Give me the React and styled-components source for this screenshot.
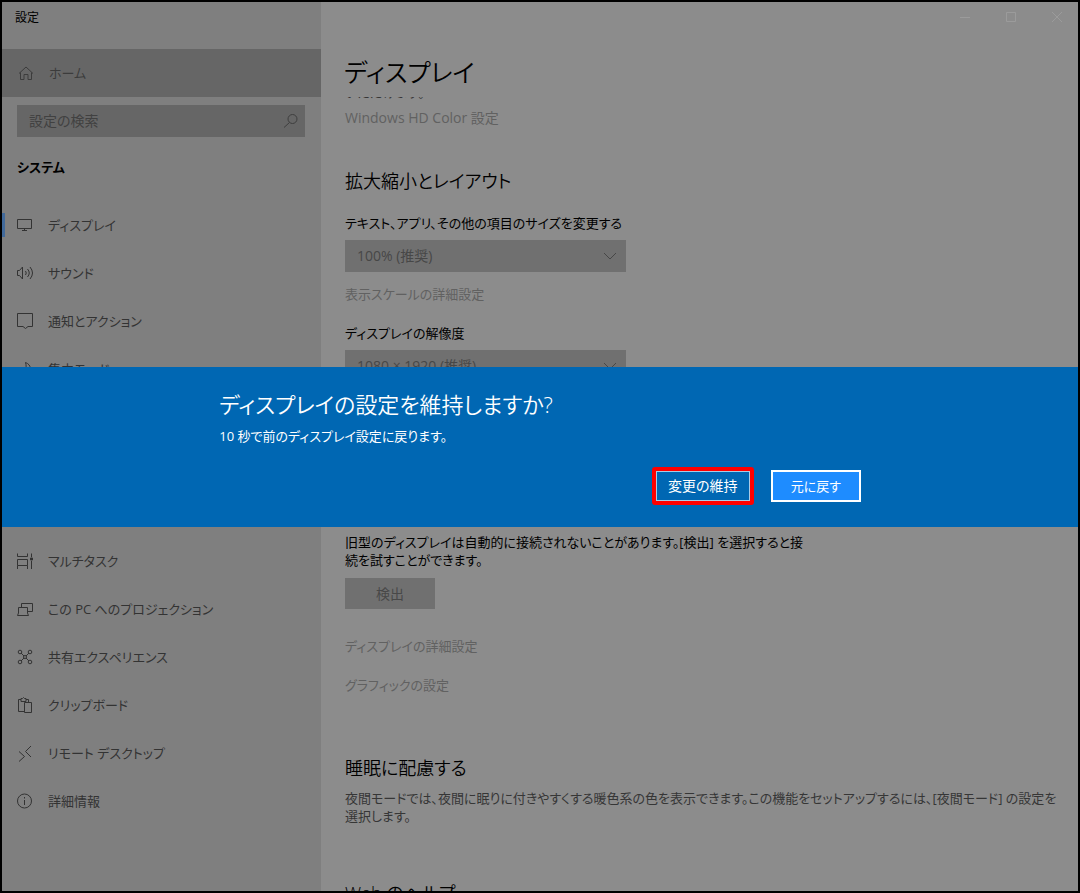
import React from "react";
import styled, { createGlobalStyle, css } from "styled-components";

const GlobalStyle = createGlobalStyle`
  *, *::before, *::after {
    box-sizing: border-box;
  }

  body {
    margin: 0;
    color: #000;
    font-family: "Open Sans", "Noto Sans CJK JP", sans-serif;
    font-size: 13px;
    font-feature-settings: "palt";
    line-height: 18px;
  }

  h1, h2, h3, p, ul {
    margin: 0;
    padding: 0;
  }

  button, input, select {
    border: 0;
    border-radius: 0;
    padding: 0;
    font: inherit;
    font-size: 14px;
    font-feature-settings: inherit;
  }
`;

const Window = styled.div`
  display: grid;
  grid-template-columns: 319px 1fr;
  height: 100vh;
  border: 2px solid #000;
  background: #8c8c8c;
  overflow: hidden;
`;

const Sidebar = styled.aside`
  background: #7f7f7f;
  overflow: hidden;
`;

const AppTitle = styled.div`
  height: 47px;
  padding: 7px 13px;
  font-size: 12px;
`;

const Icon = styled.svg`
  flex: none;
  width: 18px;
  height: 18px;
  fill: none;
  stroke: currentColor;
`;

const rowStyle = css`
  display: flex;
  align-items: center;
  gap: 14px;
  height: 48px;
  padding-left: 14px;
  color: #333;
  text-decoration: none;
`;

const HomeLink = styled.a`
  ${rowStyle}
  padding-left: 15px;
  background: #666;
  color: #3c3c3c;
`;

const SearchBox = styled.label`
  display: flex;
  align-items: center;
  height: 32px;
  margin: 8px 16px 0 15px;
  padding: 0 6px 0 12px;
  background: #666;
  color: #3e3e3e;
`;

const SearchInput = styled.input`
  flex: 1;
  min-width: 0;
  background: none;
  outline: none;

  &::placeholder {
    color: #414141;
    opacity: 1;
  }
`;

const Category = styled.h2`
  padding: 21px 15px 25px;
  font-size: 13px;
  font-weight: 600;
  line-height: 18px;
`;

const NavList = styled.ul`
  list-style: none;
  margin-top: ${(props) => props.$offset || 0}px;
`;

const NavLink = styled.a`
  ${rowStyle}
  ${(props) =>
    props.$active &&
    css`
      background: linear-gradient(#41699a, #41699a) left center / 3px 24px no-repeat;
    `}
`;

const Main = styled.main`
  display: flex;
  flex-direction: column;
  min-width: 0;
  min-height: 0;
`;

const Controls = styled.div`
  display: flex;
  justify-content: flex-end;
  height: 47px;
`;

const ControlButton = styled.button`
  display: grid;
  place-items: center;
  width: 46px;
  height: 30px;
  padding-left: 4px;
  background: none;
  color: #9b9b9b;
`;

const PageTitle = styled.h1`
  height: 48px;
  padding-left: 23px;
  font-size: 25px;
  font-weight: 350;
  line-height: 46px;
`;

const Scroller = styled.div`
  flex: 1;
  min-height: 0;
  padding: 0 8px 0 24px;
  overflow: hidden;
`;

const Content = styled.div`
  display: flex;
  flex-direction: column;
  align-items: flex-start;
  margin-top: -14px;
`;

const TextLink = styled.a`
  margin-top: ${(props) => props.$top}px;
  color: #616161;
  font-size: ${(props) => (props.$large ? 14 : 13)}px;
  text-decoration: none;
`;

const SectionTitle = styled.h2`
  margin-top: ${(props) => props.$top}px;
  font-size: 18px;
  font-weight: 350;
  line-height: 28px;
`;

const Label = styled.label`
  margin-top: ${(props) => props.$top}px;
`;

const SelectBox = styled.div`
  display: grid;
  align-items: center;
  width: 281px;
  margin-top: 8px;
  background: #707070;
  color: #474747;

  > * {
    grid-area: 1 / 1;
  }

  > svg {
    justify-self: end;
    margin-right: 7px;
    pointer-events: none;
  }
`;

const Select = styled.select`
  appearance: none;
  width: 100%;
  height: 32px;
  padding: 0 32px 0 12px;
  background: none;
  color: inherit;
`;

const Note = styled.p`
  margin-top: ${(props) => props.$top}px;
  color: ${(props) => (props.$muted ? "#363636" : "#000")};
`;

const DetectButton = styled.button`
  width: 90px;
  height: 31px;
  margin-top: 9px;
  background: #707070;
  color: #484848;
`;

const Overlay = styled.div`
  position: fixed;
  inset: 0 2px;
  display: flex;
  align-items: center;
`;

const Dialog = styled.section`
  width: 100%;
  padding: 20px 0 22px;
  background: #0067b3;
  color: #fff;
`;

const DialogBody = styled.div`
  width: 60%;
  margin: 0 auto;
  padding: 0 2px;
`;

const DialogTitle = styled.h2`
  font-size: 22px;
  font-weight: 350;
  line-height: 34px;
`;

const DialogText = styled.p`
  margin-top: 6px;
`;

const DialogActions = styled.div`
  display: flex;
  align-items: center;
  justify-content: flex-end;
  gap: 17px;
  margin-top: 22px;
`;

const KeepButton = styled.button`
  width: 102px;
  height: 38px;
  border: 4px solid #f00;
  border-radius: 3px;
  background: #0067b3;
  box-shadow: inset 0 0 0 1px #a9cbe6;
  color: #fff;
`;

const RevertButton = styled.button`
  width: 90px;
  height: 32px;
  border: 2px solid #fff;
  background: #1e8cff;
  color: #fff;
  font-size: 13px;
`;

const icons = {
  home: <path d="M2 9.5 9 3l7 6.5M3.5 8.5v7H7v-5h4v5h3.5v-7" />,
  search: (
    <>
      <circle cx="11.5" cy="7" r="4.5" />
      <path d="M8.5 10.5 3 15.5" />
    </>
  ),
  display: <path d="M1.5 3.5h14v9h-14zM8.5 12.5v2M6 14.5h5" />,
  sound: (
    <>
      <path d="M1.5 6.5v5h2l3 3.5V3l-3 3.5z" />
      <path d="M9.5 7q1.5 2 0 4M11.5 5q3.5 4 0 8M14 3q5 6 0 12" />
    </>
  ),
  notice: <path d="M1.5 1.5h15v13H12l-2.5 2-2.5-2H1.5z" />,
  moon: <path d="M9.5 2.5c3 1 5 3.5 5 6.5a7 7 0 0 1-11 5.5c5-.5 8-6 6-12z" />,
  multitask: (
    <>
      <path d="M1.5 1.5v3h10v-3M1.5 7.5h10v6h-10zM1.500 17v-3.500M11.500 17v-3.500M15.500 1.500V5M15.500 9v8" />
      <path d="M14.5 6h2v2h-2z" fill="currentColor" />
    </>
  ),
  project: <path d="M5.5 7.5v-4h11v8h-5M2.5 13V7.5h9V13L12.5 15.500h-11z" />,
  share: (
    <>
      <circle cx="4" cy="4" r="1.8" />
      <circle cx="14" cy="4" r="1.8" />
      <circle cx="9" cy="9" r="1.5" />
      <circle cx="4" cy="14" r="1.8" />
      <circle cx="14" cy="14" r="1.8" />
      <path d="m5 5 3 3M13 5l-3 3M8 10l-3 3M10 10l3 3" />
    </>
  ),
  clipboard: (
    <path d="M8 15.500H2.500v-12H5M10 3.500h2.500V6M5 5.500v-3h1.500l1-1 1 1H10v3zM8.500 6.500h7v10h-7z" />
  ),
  remote: <path d="m3 7.5 5.500 5L3 17.500M15 2 9.500 7.500 15 13" />,
  info: (
    <>
      <circle cx="8.500" cy="9" r="7" />
      <path d="M8.500 8v5M8.500 5v1.500" />
    </>
  ),
  chevron: <path d="m3 6 6 6 6-6" />,
  minimize: <path d="M4 9.500h10" />,
  maximize: <path d="M4.500 4.500h9v9h-9z" />,
  close: <path d="m4 4 10 10M14 4 4 14" />,
};

const Glyph = ({ name }) => (
  <Icon viewBox="0 0 18 18" aria-hidden="true">
    {icons[name]}
  </Icon>
);

const primaryNav = [
  { icon: "display", text: "ディスプレイ", active: true },
  { icon: "sound", text: "サウンド" },
  { icon: "notice", text: "通知とアクション" },
  { icon: "moon", text: "集中モード" },
];

const secondaryNav = [
  { icon: "multitask", text: "マルチタスク" },
  { icon: "project", text: "この PC へのプロジェクション" },
  { icon: "share", text: "共有エクスペリエンス" },
  { icon: "clipboard", text: "クリップボード" },
  { icon: "remote", text: "リモート デスクトップ" },
  { icon: "info", text: "詳細情報" },
];

const Nav = ({ items, offset }) => (
  <NavList $offset={offset}>
    {items.map((item) => (
      <li key={item.icon}>
        <NavLink href="#" $active={item.active}>
          <Glyph name={item.icon} />
          {item.text}
        </NavLink>
      </li>
    ))}
  </NavList>
);

const Dropdown = ({ id, value }) => (
  <SelectBox>
    <Select id={id} defaultValue={value}>
      <option>{value}</option>
    </Select>
    <Glyph name="chevron" />
  </SelectBox>
);

const App = () => (
  <>
    <GlobalStyle />
    <Window>
      <Sidebar>
        <AppTitle>設定</AppTitle>
        <HomeLink href="#">
          <Glyph name="home" />
          ホーム
        </HomeLink>
        <SearchBox>
          <SearchInput type="text" placeholder="設定の検索" aria-label="設定の検索" />
          <Glyph name="search" />
        </SearchBox>
        <Category>システム</Category>
        <nav>
          <Nav items={primaryNav} />
          <Nav items={secondaryNav} offset={144} />
        </nav>
      </Sidebar>

      <Main>
        <Controls>
          <ControlButton aria-label="最小化"><Glyph name="minimize" /></ControlButton>
          <ControlButton aria-label="最大化"><Glyph name="maximize" /></ControlButton>
          <ControlButton aria-label="閉じる"><Glyph name="close" /></ControlButton>
        </Controls>
        <PageTitle>ディスプレイ</PageTitle>
        <Scroller>
          <Content>
            <Note $top={0} $muted>いただけます。</Note>
            <TextLink href="#" $top={8} $large>Windows HD Color 設定</TextLink>

            <SectionTitle $top={40}>拡大縮小とレイアウト</SectionTitle>
            <Label htmlFor="scale" $top={19}>テキスト、アプリ、その他の項目のサイズを変更する</Label>
            <Dropdown id="scale" value="100% (推奨)" />
            <TextLink href="#" $top={13}>表示スケールの詳細設定</TextLink>
            <Label htmlFor="resolution" $top={21}>ディスプレイの解像度</Label>
            <Dropdown id="resolution" value="1080 × 1920 (推奨)" />

            <Note $top={151}>
              旧型のディスプレイは自動的に接続されないことがあります。[検出] を選択すると接
              <br />
              続を試すことができます。
            </Note>
            <DetectButton>検出</DetectButton>
            <TextLink href="#" $top={28}>ディスプレイの詳細設定</TextLink>
            <TextLink href="#" $top={21}>グラフィックの設定</TextLink>

            <SectionTitle $top={60}>睡眠に配慮する</SectionTitle>
            <Note $top={7} $muted>
              夜間モードでは、夜間に眠りに付きやすくする暖色系の色を表示できます。この機能をセットアップするには、[夜間モード] の設定を
              <br />
              選択します。
            </Note>
            <SectionTitle $top={54}>Web のヘルプ</SectionTitle>
          </Content>
        </Scroller>
      </Main>
    </Window>

    <Overlay>
      <Dialog role="dialog" aria-labelledby="dialog-title">
        <DialogBody>
          <DialogTitle id="dialog-title">ディスプレイの設定を維持しますか?</DialogTitle>
          <DialogText>10 秒で前のディスプレイ設定に戻ります。</DialogText>
          <DialogActions>
            <KeepButton>変更の維持</KeepButton>
            <RevertButton>元に戻す</RevertButton>
          </DialogActions>
        </DialogBody>
      </Dialog>
    </Overlay>
  </>
);

export default App;
